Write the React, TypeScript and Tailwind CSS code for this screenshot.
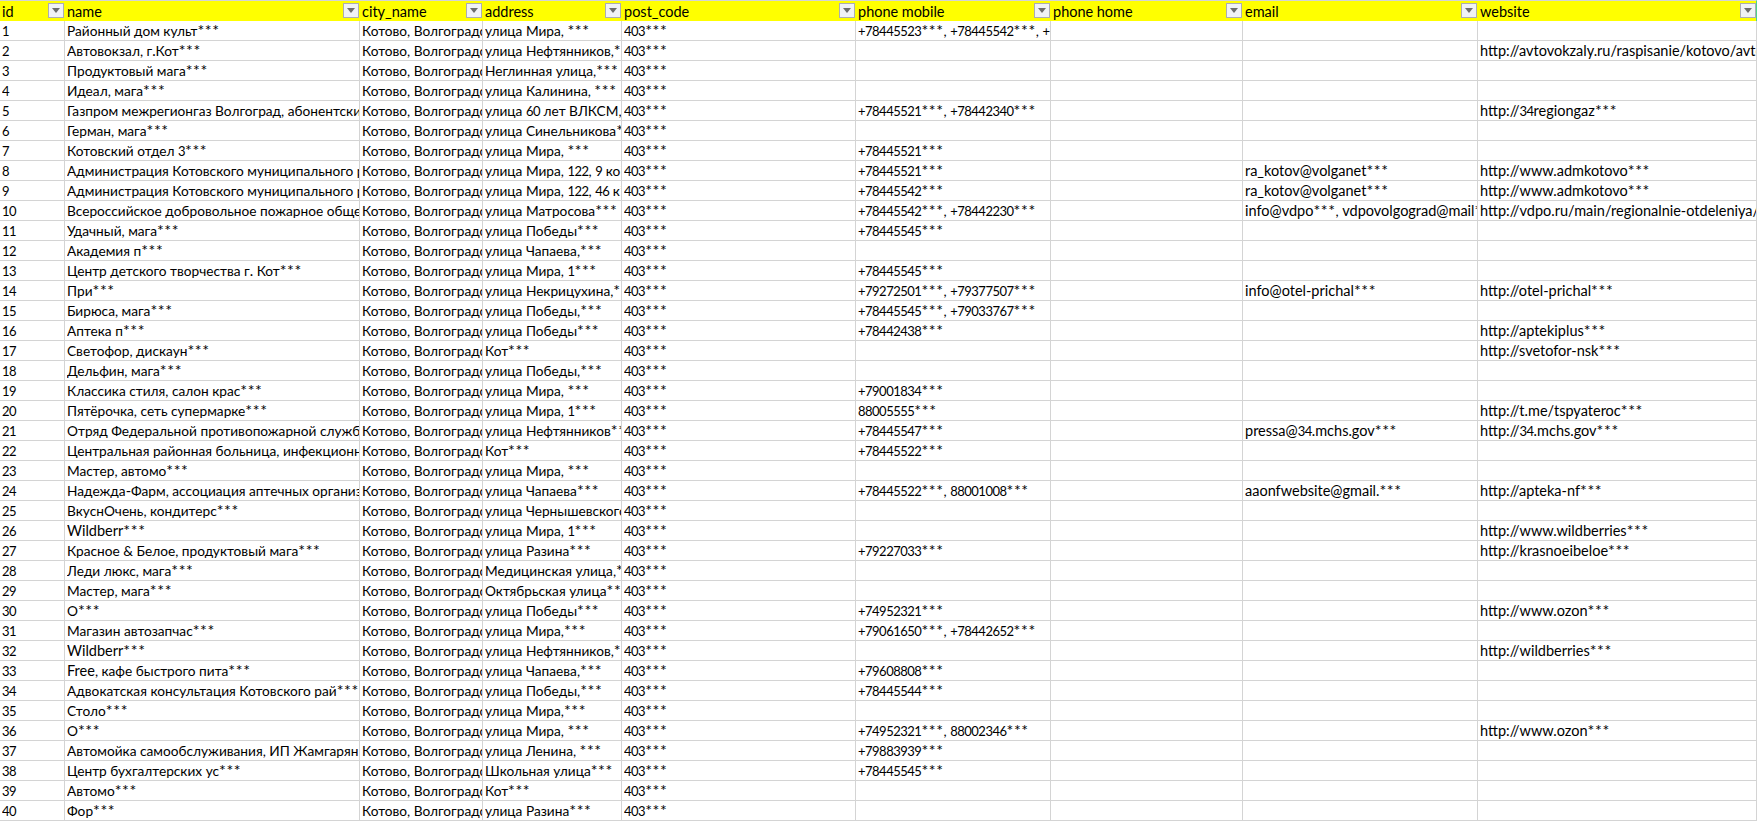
const F = "Котово, Волгоградская область";
const P = "403***";
type Row = [string, string, string, string, string, string];
const rows: Row[] = [
  ["Районный дом культ***", "улица Мира, ***", "+78445523***, +78445542***, +79000000000", "", "", ""],
  ["Автовокзал, г.Кот***", "улица Нефтянников,***", "", "", "", "http://avtovokzaly.ru/raspisanie/kotovo/avtovokzal-kotovo"],
  ["Продуктовый мага***", "Неглинная улица,***", "", "", "", ""],
  ["Идеал, мага***", "улица Калинина, ***", "", "", "", ""],
  ["Газпром межрегионгаз Волгоград, абонентский пункт", "улица 60 лет ВЛКСМ, ***", "+78445521***, +78442340***", "", "", "http://34regiongaz***"],
  ["Герман, мага***", "улица Синельникова***", "", "", "", ""],
  ["Котовский отдел 3***", "улица Мира, ***", "+78445521***", "", "", ""],
  ["Администрация Котовского муниципального района", "улица Мира, 122, 9 ко***", "+78445521***", "", "ra_kotov@volganet***", "http://www.admkotovo***"],
  ["Администрация Котовского муниципального района", "улица Мира, 122, 46 к***", "+78445542***", "", "ra_kotov@volganet***", "http://www.admkotovo***"],
  ["Всероссийское добровольное пожарное общество", "улица Матросова***", "+78445542***, +78442230***", "", "info@vdpo***, vdpovolgograd@mail***", "http://vdpo.ru/main/regionalnie-otdeleniya/volgograd"],
  ["Удачный, мага***", "улица Победы***", "+78445545***", "", "", ""],
  ["Академия п***", "улица Чапаева,***", "", "", "", ""],
  ["Центр детского творчества г. Кот***", "улица Мира, 1***", "+78445545***", "", "", ""],
  ["При***", "улица Некрицухина,***", "+79272501***, +79377507***", "", "info@otel-prichal***", "http://otel-prichal***"],
  ["Бирюса, мага***", "улица Победы,***", "+78445545***, +79033767***", "", "", ""],
  ["Аптека п***", "улица Победы***", "+78442438***", "", "", "http://aptekiplus***"],
  ["Светофор, дискаун***", "Кот***", "", "", "", "http://svetofor-nsk***"],
  ["Дельфин, мага***", "улица Победы,***", "", "", "", ""],
  ["Классика стиля, салон крас***", "улица Мира, ***", "+79001834***", "", "", ""],
  ["Пятёрочка, сеть супермарке***", "улица Мира, 1***", "88005555***", "", "", "http://t.me/tspyateroc***"],
  ["Отряд Федеральной противопожарной службы", "улица Нефтянников***", "+78445547***", "", "pressa@34.mchs.gov***", "http://34.mchs.gov***"],
  ["Центральная районная больница, инфекционное", "Кот***", "+78445522***", "", "", ""],
  ["Мастер, автомо***", "улица Мира, ***", "", "", "", ""],
  ["Надежда-Фарм, ассоциация аптечных организаций", "улица Чапаева***", "+78445522***, 88001008***", "", "aaonfwebsite@gmail.***", "http://apteka-nf***"],
  ["ВкуснОчень, кондитерс***", "улица Чернышевского***", "", "", "", ""],
  ["Wildberr***", "улица Мира, 1***", "", "", "", "http://www.wildberries***"],
  ["Красное & Белое, продуктовый мага***", "улица Разина***", "+79227033***", "", "", "http://krasnoeibeloe***"],
  ["Леди люкс, мага***", "Медицинская улица,***", "", "", "", ""],
  ["Мастер, мага***", "Октябрьская улица***", "", "", "", ""],
  ["О***", "улица Победы***", "+74952321***", "", "", "http://www.ozon***"],
  ["Магазин автозапчас***", "улица Мира,***", "+79061650***, +78442652***", "", "", ""],
  ["Wildberr***", "улица Нефтянников,***", "", "", "", "http://wildberries***"],
  ["Free, кафе быстрого пита***", "улица Чапаева,***", "+79608808***", "", "", ""],
  ["Адвокатская консультация Котовского рай***", "улица Победы,***", "+78445544***", "", "", ""],
  ["Столо***", "улица Мира,***", "", "", "", ""],
  ["О***", "улица Мира, ***", "+74952321***, 88002346***", "", "", "http://www.ozon***"],
  ["Автомойка самообслуживания, ИП Жамгарян Э.", "улица Ленина, ***", "+79883939***", "", "", ""],
  ["Центр бухгалтерских ус***", "Школьная улица***", "+78445545***", "", "", ""],
  ["Автомо***", "Кот***", "", "", "", ""],
  ["Фор***", "улица Разина***", "", "", "", ""],
];

const headers = ["id", "name", "city_name", "address", "post_code", "phone mobile", "phone home", "email", "website"];

function T({ s }: { s: string }) {
  const parts = s.split(/(\*+|[+\d]+|[A-Za-z@:\/._\-]+)/).filter(Boolean);
  return (
    <>
      {parts.map((p, i) => {
        let c = "text-[13.7px]";
        if (p[0] === "*") c = "text-[16px] leading-none tracking-[0.6px]";
        else if (/^[+\d]/.test(p)) c = "text-[13px] tracking-[-0.5px]";
        else if (/^[A-Za-z@:\/._\-]/.test(p)) c = "text-[14.5px] leading-none";
        return (
          <span key={i} className={c}>
            {p}
          </span>
        );
      })}
    </>
  );
}

function FilterButton() {
  return (
    <span className="flex h-[15px] w-[16px] shrink-0 items-center justify-center border border-[#abadb3] bg-[#f0f2f5]">
      <svg width="10" height="6" viewBox="0 0 10 6"><path d="M1 0h8L5 5z" fill="#6d6d6d" /></svg>
    </span>
  );
}

function Cell({ s }: { s: string }) {
  return (
    <td className="border-r border-b border-[#d4d4d4] p-0 pl-[2px] text-left align-top">
      <div className="h-[19px] overflow-hidden whitespace-nowrap leading-[19px]">
        <T s={s} />
      </div>
    </td>
  );
}

export default function App() {
  return (
    <div className="h-[821px] w-[1757px] overflow-hidden bg-white text-[14px] text-black [font-family:Lato,'Noto_Sans',sans-serif]">
      <table className="w-[1757px] table-fixed border-separate border-spacing-0">
        <colgroup>
          <col className="w-[65px]" />
          <col className="w-[295px]" />
          <col className="w-[123px]" />
          <col className="w-[139px]" />
          <col className="w-[234px]" />
          <col className="w-[195px]" />
          <col className="w-[192px]" />
          <col className="w-[235px]" />
          <col className="w-[279px]" />
        </colgroup>
        <thead>
          <tr>
            {headers.map((h) => (
              <th key={h} className="border-t border-[#d4d4d4] bg-[#ffff00] p-0 pl-[2px] pr-[1px] text-left font-normal last:border-r last:border-r-[#4fd18b] last:pr-0">
                <div className="flex h-[20px] items-start justify-between overflow-hidden pt-[2px]">
                  <span className="leading-[17px]"><T s={h} /></span>
                  <FilterButton />
                </div>
              </th>
            ))}
          </tr>
        </thead>
        <tbody>
          {rows.map((r, i) => (
            <tr key={i}>
              <Cell s={String(i + 1)} />
              <Cell s={r[0]} />
              <Cell s={F} />
              <Cell s={r[1]} />
              <Cell s={P} />
              <Cell s={r[2]} />
              <Cell s={r[3]} />
              <Cell s={r[4]} />
              <Cell s={r[5]} />
            </tr>
          ))}
        </tbody>
      </table>
    </div>
  );
}
